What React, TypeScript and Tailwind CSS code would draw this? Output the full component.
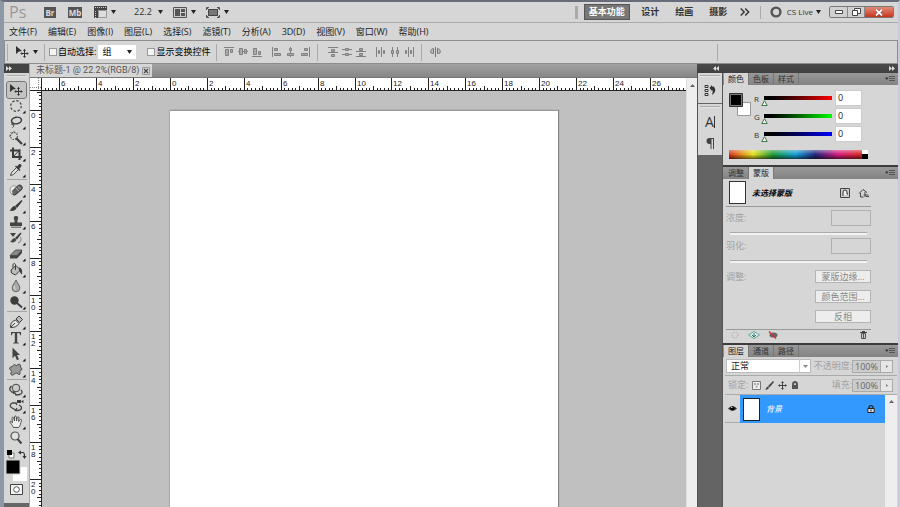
import { useLayoutEffect, useRef, useState, type ReactNode } from "react";
import clsx from "clsx";

const UNIT = 18.45;

/* ---------- small shared drawings ---------- */

function Caret({ className }: { className?: string }) {
  return (
    <svg width="5" height="4" viewBox="0 0 5 4" className={clsx("shrink-0", className)}>
      <path d="M0 0h5L2.5 4z" fill="#222" />
    </svg>
  );
}

function DoubleArrow({ flip }: { flip?: boolean }) {
  return (
    <svg width="6" height="5" viewBox="0 0 6 5" className={flip ? "rotate-180" : ""}>
      <path d="M0 0l3 2.5L0 5zM3 0l3 2.5L3 5z" fill="#ddd" />
    </svg>
  );
}

function PanelMenuIcon() {
  return (
    <svg width="10" height="6" viewBox="0 0 10 6">
      <path d="M0 1.5h3.6L1.8 4z" fill="#333" />
      <path d="M4 .5h6M4 2.5h6M4 4.5h6" stroke="#555" />
    </svg>
  );
}

function ScrollUp() {
  return (
    <svg width="5" height="3" viewBox="0 0 5 3">
      <path d="M0 3L2.5 0 5 3z" fill="#666" />
    </svg>
  );
}

function MovePaths() {
  return (
    <>
      <path d="M1 0l6 5-3 .5L1 8z" fill="#333" />
      <path d="M9.5 4v7M6 7.5h7" stroke="#333" />
      <path d="M9.5 2.8L11 5H8zM9.5 12L11 10H8zM5.2 7.5L7.2 6v3zM13.8 7.5L11.8 6v3z" fill="#333" />
    </>
  );
}

/* ---------- tool icons ---------- */

interface Tool {
  name: string;
  icon: ReactNode;
  single?: boolean;
}

const DARK = "#3c3c3c";

const TOOL_GROUPS: Tool[][] = [
  [
    { name: "移动工具", icon: <g transform="translate(1 2)"><MovePaths /></g>, single: true },
    { name: "椭圆选框工具", icon: <circle cx="8" cy="8" r="5.3" stroke="#444" strokeWidth="1.2" strokeDasharray="2.4 1.7" /> },
    { name: "套索工具", icon: <><ellipse cx="8.5" cy="6.5" rx="5" ry="3.3" stroke={DARK} strokeWidth="1.5" transform="rotate(-10 8.5 6.5)" /><path d="M4.5 9c-1.6.5-1 2.3.5 1.8S6 8.5 4.5 9zM5.5 10.5c.5 1.5 0 2.5-1 3" stroke={DARK} /></> },
    { name: "魔棒工具", icon: <><circle cx="6" cy="6" r="3.5" stroke="#555" strokeWidth="1.2" strokeDasharray="1.5 1.2" /><path d="M6 .8v2M1 6h2M2.5 2.5l1 1M9.5 2.5l-1 1" stroke="#666" /><path d="M8 8l6 6" stroke={DARK} strokeWidth="2.2" /></> },
    { name: "裁剪工具", icon: <><path d="M5 1.5V11h9M2 4.5h9.5V14" stroke={DARK} strokeWidth="2" /><path d="M5 11l7-7.5" stroke={DARK} /></> },
    { name: "吸管工具", icon: <><path d="M2.5 13.5l1-3 5-5 2 2-5 5z" fill="#ddd" stroke={DARK} strokeWidth=".9" /><path d="M7 4.5L11.5 9l1-1-1.2-1.3 2-2.2c1-1.5-1-3.2-2.3-2.2L9 4.4 8 3.5z" fill={DARK} /></> },
  ],
  [
    { name: "污点修复画笔工具", icon: <><rect x="3" y="5.5" width="12" height="5" rx="2.5" fill="#666" stroke={DARK} transform="rotate(-42 9 8)" /><path d="M8 6l3 3.2M10 4.5l2.5 2.5" stroke="#ccc" strokeWidth=".8" /><path d="M5 12C1 12 1 5 5 4c2-.5 3 0 3 1L4 9z" fill="#eee" stroke="#888" strokeWidth=".8" /></> },
    { name: "画笔工具", icon: <><path d="M7 8l6.5-6 1 1L9 10z" fill={DARK} /><path d="M8.5 10.2C7 13 4.5 13.5 1.5 12.5 3.5 11.5 3.5 8 7 8z" fill={DARK} /></> },
    { name: "仿制图章工具", icon: <><path d="M8 2c2.8 0 2.5 2.5 1.5 4v2.5H14V12H2V8.5h4.5V6C5.5 4.5 5.2 2 8 2z" fill="#444" /><path d="M3 13.2h10" stroke="#555" /></> },
    { name: "历史记录画笔工具", icon: <><path d="M7 8l5.5-5.5 1 1L9 9.5z" fill={DARK} /><path d="M8.5 9.7C7 12.5 5 13 2 12 4 11 4 8 7 8zM2 3h6L5 7z" fill="#444" /><path d="M12 7c2 2 1 5-2 6" stroke="#777" /></> },
    { name: "橡皮擦工具", icon: <><path d="M2 9.5L7.5 4H14L9 9.5z" fill="#888" stroke="#444" strokeWidth=".8" /><path d="M2 9.5h7L14 4v3l-5 5.5H2z" fill="#444" /></> },
    { name: "油漆桶工具", icon: <><path d="M3 8l5-4.5L12.5 8l-5 5-4-2z" fill="#bbb" stroke={DARK} /><path d="M7.5 8V3c0-2-2.5-2-2.5 0v3" stroke={DARK} /><path d="M11 5.5c3 .5 3.500 3 3 7-2-1-2-4-3-4z" fill={DARK} /></> },
    { name: "模糊工具", icon: <><path d="M8 2c1 3 3.8 5 3.8 8a3.8 3.8 0 0 1-7.6 0C4.2 7 7 5 8 2z" fill="#aaa" stroke="#666" /><path d="M6.5 8c-.8 2 0 3.500 1 3.700" stroke="#eee" /></> },
    { name: "减淡工具", icon: <><circle cx="6.5" cy="6.5" r="4.2" fill={DARK} /><path d="M9 9l5 4.5" stroke={DARK} strokeWidth="1.8" /></> },
  ],
  [
    { name: "钢笔工具", icon: <><path d="M2.5 13.5c0-4 1-6 5-7.5L11 9.500c-2 3-4 4-8.500 4zM3 13l4-4" fill="#e4e4e4" stroke={DARK} /><path d="M8 5l3-3 3.5 3.5-3 3z" fill="#bbb" stroke={DARK} /></> },
    { name: "横排文字工具", icon: <path d="M3 2h10v3.3h-.8C12 3.5 11.5 3 9.200 3v8.500c0 1 .5 1.200 1.600 1.300v.7H5.200v-.7c1.100-.1 1.600-.3 1.600-1.300V3C4.500 3 4 3.500 3.800 5.300H3z" fill="#444" /> },
    { name: "路径选择工具", icon: <path d="M4.5 1.5L12 9H9l2 4.2-2 1-2-4.4-2.5 2.4z" fill="#444" /> },
    { name: "自定形状工具", icon: <path d="M5 4c.5-2 2.5-2 3 0 2-2 4.5-2.5 4.5 0-1 1.5 2.5 2 1 4-3 .5-.5 3-2 4.5-1.5.5-2-2-3.5-1.5-2 1-3 3-5 1.5-1-1.5 1.5-3 0-4C1 7 1.500 5.500 2.500 5S4.500 5 5 4z" fill="#999" stroke="#444" /> },
  ],
  [
    { name: "3D 旋转工具", icon: <><circle cx="8" cy="6" r="3.8" fill="#ccc" stroke="#444" /><path d="M3.5 4C0 7 2 10 7 11l1 2 4-.5M6 9l-.5 3M13 8c2 2 1 3.5-1 4.5" stroke="#444" strokeWidth="1.3" /></> },
    { name: "3D 相机工具", icon: <><path d="M4 5C0 8 3 10 9 12.5M11 7c4 2 3 5-1 5.5H7.5L9 10M4 5h4l1 2" stroke="#444" strokeWidth="1.3" /><path d="M9 2h4v3H9zM13.5 3l2-1v3l-2-1z" fill={DARK} /></> },
    { name: "抓手工具", icon: <path d="M5.5 13.5C4.5 11 2 9 2 8c0-1.200 1.500-.8 2.500.8L4 4.500C3.700 3 5.300 2.700 5.700 4l.8 3V3c0-1.500 1.700-1.500 1.800 0l.2 4 .8-3.500c.3-1.200 1.900-.8 1.700.5L10.500 7.500 12 5.800c.8-1 2-.3 1.500.8-1 2-.8 5.400-3 6.900z" fill="#eee" stroke="#444" strokeWidth=".9" /> },
    { name: "缩放工具", icon: <><circle cx="7" cy="6" r="4" fill="#e2e2e2" stroke="#555" strokeWidth="1.2" /><path d="M9.5 9l4 4.5" stroke="#444" strokeWidth="2" /></>, single: true },
  ],
];

function Toolbox() {
  const [active, setActive] = useState("移动工具");
  return (
    <aside className="flex w-[26px] shrink-0 flex-col border-r border-[#a8a8a8] bg-[#d6d6d6]">
      <div className="flex h-[9px] items-center bg-[#444] pl-0.5">
        <DoubleArrow />
      </div>
      <div className="mx-[3px] mt-0.5 mb-[5px] h-0.5 border-t border-[#aaa] bg-[#e5e5e5]" />
      {TOOL_GROUPS.map((group, i) => (
        <div key={i} className={clsx("flex flex-col items-center", i > 0 && "mt-px")}>
          {i > 0 && <div className="mb-0.5 h-px w-5 bg-[#a5a5a5]" />}
          {group.map((tool) => (
            <button
              key={tool.name}
              aria-label={tool.name}
              onClick={() => setActive(tool.name)}
              className={clsx(
                "flex h-4 w-[19px] items-center justify-center",
                active === tool.name && "rounded-xs bg-[#c4c4c4] outline outline-[#777]",
              )}
            >
              <svg width="18" height="16" viewBox="0 0 18 16" fill="none">
                {tool.icon}
                {!tool.single && <path d="M17.5 12.5v3h-3z" fill="#111" />}
              </svg>
            </button>
          ))}
        </div>
      ))}
      <svg width="24" height="34" viewBox="0 0 24 34" className="mt-1">
        <path d="M5 3h5v5H5z" fill="#fff" stroke="#777" />
        <path d="M3 0h5v5H3z" fill="#000" />
        <path d="M15.5 2.5H19q1.5 0 1.5 4" fill="none" stroke="#333" strokeWidth="1.2" />
        <path d="M14 2.5L17 .5v4zM20.5 9L18.5 6h4z" fill="#333" />
        <path d="M9 17h14v14H9z" fill="#fff" />
        <path d="M2 10h14v14H2z" fill="#000" stroke="#ccc" />
      </svg>
      <button aria-label="以快速蒙版模式编辑" className="ml-1.5 h-[11px] w-[13px]">
        <svg width="13" height="11" viewBox="0 0 13 11">
          <path d="M.5.5h12v10H.5z" fill="#f2f2f2" stroke="#444" />
          <circle cx="6.5" cy="5.5" r="2.8" fill="#fff" stroke="#555" />
        </svg>
      </button>
      <div className="mt-2 flex-1 bg-[#666]" />
    </aside>
  );
}

/* ---------- header ---------- */

const MENUS = ["文件(F)", "编辑(E)", "图像(I)", "图层(L)", "选择(S)", "滤镜(T)", "分析(A)", "3D(D)", "视图(V)", "窗口(W)", "帮助(H)"];
const WORKSPACES = ["设计", "绘画", "摄影"];

function AppBar() {
  return (
    <header className="flex h-[21px] items-center border-b border-[#aaa] pl-[5px] text-[9px] text-[#333]">
      <span className="w-[35px] text-base leading-5 text-[#999]">Ps</span>
      <button className="h-[11px] w-3 bg-[#555] text-center text-[8px] leading-[11px] font-bold text-[#ddd]">Br</button>
      <button className="ml-3 h-[11px] w-[14px] bg-[#555] text-center text-[8px] leading-[11px] font-bold text-[#ddd]">Mb</button>
      <button aria-label="查看额外内容" className="ml-3 flex items-center gap-1">
        <svg width="13" height="12" viewBox="0 0 13 12">
          <path d="M0 0h13v4H4v8H0z" fill="#444" />
          <path d="M1 1.5h12M1.5 5v7" stroke="#ccc" strokeDasharray="1 1" />
          <path d="M4.5 4.5h8v7h-8z" fill="#ddd" stroke="#999" />
        </svg>
        <Caret />
      </button>
      <button className="ml-[18px] flex items-center gap-1.5">22.2<Caret /></button>
      <button aria-label="排列文档" className="ml-2.5 flex items-center gap-1">
        <svg width="14" height="11" viewBox="0 0 14 11">
          <path d="M.5.5h13v10H.5z" fill="#ccc" stroke="#555" />
          <path d="M2 2h5v7H2zM8 2h4v3H8zM8 6h4v3H8z" fill="#555" />
        </svg>
        <Caret />
      </button>
      <button aria-label="屏幕模式" className="ml-2.5 flex items-center gap-1">
        <svg width="14" height="11" viewBox="0 0 14 11">
          <path d="M2.5 2.5h9v6h-9z" fill="#777" stroke="#444" />
          <path d="M.5 3V.5H3M11 .5h2.5V3M13.5 8v2.5H11M3 10.5H.5V8M1 1l2 2M13 1l-2 2M1 10l2-2M13 10l-2-2" fill="none" stroke="#555" />
        </svg>
        <Caret />
      </button>

      <div className="ml-auto mr-1 flex items-center">
        <div className="mr-1.5 h-[13px] w-[3px] bg-[#aaa]" />
        <button className="h-4 w-[46px] border border-[#555] bg-[#777] font-bold leading-[14px] text-white">基本功能</button>
        <div className="ml-[11px] flex gap-[15px]">
          {WORKSPACES.map((w) => (
            <button key={w} className="w-[19px] font-bold">{w}</button>
          ))}
        </div>
        <button aria-label="更多工作区" className="ml-3">
          <svg width="10" height="8" viewBox="0 0 10 8">
            <path d="M.7.5L4.200 4 .7 7.500M5.200.5L8.700 4 5.200 7.500" fill="none" stroke="#333" strokeWidth="1.4" />
          </svg>
        </button>
        <div className="ml-2.5 mr-[9px] h-[13px] w-px bg-[#aaa]" />
        <button className="flex items-center text-[8px]">
          <svg width="12" height="12" viewBox="0 0 12 12" className="mr-[5px]">
            <circle cx="6" cy="6" r="4.4" fill="none" stroke="#555" strokeWidth="2.4" />
          </svg>
          CS Live
          <Caret className="ml-[3px]" />
        </button>
        <div className="ml-2 flex h-3 overflow-hidden rounded-xs border border-[#777]">
          <button aria-label="最小化" className="flex w-[17px] items-center justify-center bg-[#d0d0d0]">
            <svg width="8" height="4" viewBox="0 0 8 4"><path d="M.5.5h7v3h-7z" fill="#fff" stroke="#444" /></svg>
          </button>
          <button aria-label="还原" className="flex w-[18px] items-center justify-center border-x border-[#888] bg-[#d0d0d0]">
            <svg width="9" height="8" viewBox="0 0 9 8">
              <path d="M2.5.5h6v5h-6z" fill="#fff" stroke="#444" />
              <path d="M.5 2.5h5v5h-5z" fill="#fff" stroke="#444" />
            </svg>
          </button>
          <button aria-label="关闭" className="flex w-7 items-center justify-center bg-linear-to-b from-[#e08a75] to-[#c8321a]">
            <svg width="8" height="7" viewBox="0 0 8 7">
              <path d="M1 .5l6 6M7 .5l-6 6" stroke="#743" strokeWidth="3" />
              <path d="M1 .5l6 6M7 .5l-6 6" stroke="#fff" strokeWidth="1.8" />
            </svg>
          </button>
        </div>
      </div>
    </header>
  );
}

function MenuBar() {
  return (
    <nav className="flex h-[17px] items-center gap-[11px] pl-[5px] text-[9px] text-[#222]">
      {MENUS.map((m) => (
        <button key={m} className="whitespace-nowrap">{m}</button>
      ))}
    </nav>
  );
}

const ALIGN_GROUPS: { name: string; d: string; line: string }[][] = [
  [
    { name: "顶对齐", d: "M1.5 2.5h3v6h-3zM6.5 2.5h2v3h-2z", line: "M0 .5h10" },
    { name: "垂直居中对齐", d: "M1.5 1.5h3v6h-3zM6.5 2.5h2v4h-2z", line: "M0 4.5h10" },
    { name: "底对齐", d: "M1.5 1.5h3v6h-3zM6.5 4.5h2v3h-2z", line: "M0 9.5h10" },
  ],
  [
    { name: "左对齐", d: "M2.5 1.5h3v2h-3zM2.5 6.5h6v2h-6z", line: "M.5 0v10" },
    { name: "水平居中对齐", d: "M3.5 1.5h2v2h-2zM1.5 6.5h6v2h-6z", line: "M4.5 0v10" },
    { name: "右对齐", d: "M4.5 1.5h3v2h-3zM1.5 6.5h6v2h-6z", line: "M9.5 0v10" },
  ],
  [
    { name: "按顶分布", d: "M3.5 2.5h3v2h-3zM3.5 7.5h3v2h-3z", line: "M0 .5h10M0 5.5h10" },
    { name: "垂直居中分布", d: "M3.5 1.5h3v2h-3zM3.5 6.5h3v2h-3z", line: "M0 2.5h10M0 7.5h10" },
    { name: "按底分布", d: "M3.5 1.5h3v2h-3zM3.5 6.5h3v2h-3z", line: "M0 4.5h10M0 9.5h10" },
  ],
  [
    { name: "按左分布", d: "M2.5 3.5h1v3h-1zM7.5 3.5h1v3h-1z", line: "M.5 0v10M5.5 0v10" },
    { name: "水平居中分布", d: "M1.5 3.5h2v3h-2zM6.5 3.5h2v3h-2z", line: "M2.5 0v10M7.5 0v10" },
    { name: "按右分布", d: "M1.5 3.5h1v3h-1zM6.5 3.5h1v3h-1z", line: "M4.5 0v10M9.5 0v10" },
  ],
];

function AlignGroup({ index }: { index: number }) {
  return (
    <div className="flex gap-1">
      {ALIGN_GROUPS[index].map((a) => (
        <button key={a.name} aria-label={a.name} className="w-[10px]">
          <svg width="10" height="10" viewBox="0 0 10 10" fill="none" stroke="#808080">
            <path d={a.line} />
            <path d={a.d} fill="#aaa" />
          </svg>
        </button>
      ))}
    </div>
  );
}

function OptionsBar() {
  const divider = "h-[17px] w-px bg-[#aaa]";
  const checkbox = "size-2 appearance-none border border-[#999] bg-[#f4f4f4] checked:bg-[#555]";
  return (
    <section className="flex h-6 items-center border border-[#8c8c8c] text-[9px] text-black">
      <div className="ml-0.5 mr-1.5 h-[17px] w-0.5 border-l border-[#aaa]" />
      <button aria-label="工具预设" className="flex items-center gap-1">
        <svg width="14" height="12" viewBox="0 0 14 12"><MovePaths /></svg>
        <Caret />
      </button>
      <div className={clsx(divider, "ml-1.5 mr-1")} />
      <label className="flex items-center gap-px">
        <input type="checkbox" className={checkbox} />
        自动选择:
      </label>
      <div className="relative ml-0.5 flex items-center">
        <select aria-label="自动选择" className="h-[14px] w-[38px] appearance-none bg-white pl-1 leading-[14px]">
          <option>组</option>
          <option>图层</option>
        </select>
        <Caret className="pointer-events-none absolute right-1" />
      </div>
      <label className="ml-[11px] flex items-center gap-px">
        <input type="checkbox" className={checkbox} />
        显示变换控件
      </label>
      <div className={clsx(divider, "ml-1.5 mr-[7px]")} />
      <AlignGroup index={0} />
      <div className="w-[10px]" />
      <AlignGroup index={1} />
      <div className={clsx(divider, "ml-[7px] mr-2.5")} />
      <AlignGroup index={2} />
      <div className="w-[10px]" />
      <AlignGroup index={3} />
      <div className={clsx(divider, "ml-[7px] mr-2")} />
      <button aria-label="自动对齐图层">
        <svg width="11" height="10" viewBox="0 0 11 10" fill="#bbb" stroke="#777">
          <path d="M5.5 0v10M3.5 1.5c-3 0-4 5-1 5h1zM7.5 1.5c3 0 4 5 1 5h-1z" />
        </svg>
      </button>
      <div className={clsx(divider, "ml-auto mr-[179px]")} />
    </section>
  );
}

/* ---------- document ---------- */

/** Tick marks for a ruler of `length` px whose zero lies at `zero` px. */
function ticks(zero: number, length: number) {
  const list: { pos: number; size: number; label?: string }[] = [];
  const first = Math.ceil((-zero * 5) / UNIT);
  const last = Math.floor(((length - zero) * 5) / UNIT);
  for (let i = first; i <= last; i++) {
    const pos = Math.round(zero + (i * UNIT) / 5);
    if (i % 10 === 0) {
      // no room for a number right at the end
      const label = pos < length - 16 ? String(Math.abs(i / 5)) : undefined;
      list.push({ pos, size: 12, label });
    } else {
      list.push({ pos, size: i % 5 === 0 ? 4 : 2 });
    }
  }
  return list;
}

function useSvgSize() {
  const ref = useRef<SVGSVGElement>(null);
  const [size, setSize] = useState({ width: 0, height: 0 });
  useLayoutEffect(() => {
    const el = ref.current;
    if (!el) return;
    const measure = () => {
      const { width, height } = el.getBoundingClientRect();
      setSize({ width, height });
    };
    measure();
    const observer = new ResizeObserver(measure);
    observer.observe(el);
    return () => observer.disconnect();
  }, []);
  return { ref, ...size };
}

function HorizontalRuler() {
  const { ref, width } = useSvgSize();
  return (
    <svg ref={ref} className="block h-[13px] min-w-0 flex-1 bg-white font-['Liberation_Sans',sans-serif]">
      {ticks(128, width).map((t) => (
        <g key={t.pos}>
          <rect x={t.pos} y={12 - t.size} width="1" height={t.size} fill="#222" />
          {t.label && <text x={t.pos + 2} y="8" fontSize="8" fill="#222">{t.label}</text>}
        </g>
      ))}
      <rect y="12" width="100%" height="1" fill="#222" />
    </svg>
  );
}

function VerticalRuler() {
  const { ref, height } = useSvgSize();
  return (
    <svg ref={ref} className="block w-3 shrink-0 bg-white font-['Liberation_Sans',sans-serif]">
      {ticks(19, height).map((t) => (
        <g key={t.pos}>
          <rect x={11 - t.size} y={t.pos} width={t.size} height="1" fill="#222" />
          {t.label?.split("").map((digit, i) => (
            <text key={i} x="1" y={t.pos + 8 + i * 7} fontSize="8" fill="#222">{digit}</text>
          ))}
        </g>
      ))}
      <rect x="11" width="1" height="100%" fill="#222" />
    </svg>
  );
}

function DocumentWindow() {
  return (
    <main className="flex min-w-0 flex-1 flex-col">
      <div className="flex h-[14px] border-b border-[#777] bg-linear-to-b from-[#a2a2a2] to-[#868686]">
        <div className="flex items-center gap-0.5 bg-[#d6d6d6] pl-1.5 pr-0.5 font-['Roboto','Noto_Sans_CJK_SC',sans-serif] text-[9px] whitespace-nowrap text-[#555]">
          未标题-1 @ 22.2%(RGB/8)
          <button aria-label="关闭文档">
            <svg width="8" height="8" viewBox="0 0 8 8">
              <path d="M.5.5h7v7h-7z" fill="none" stroke="#999" />
              <path d="M2 2l4 4M6 2L2 6" stroke="#444" strokeWidth="1.2" />
            </svg>
          </button>
        </div>
      </div>
      <div className="flex min-h-0 flex-1">
        <div className="flex min-w-0 flex-1 flex-col">
          <div className="flex">
            <svg width="12" height="13" viewBox="0 0 12 13" className="bg-white">
              <path d="M0 9.5h12M8.500 0v13" stroke="#888" strokeDasharray="1 1" />
              <path d="M11.5 0v13M0 12.5h12" stroke="#222" />
            </svg>
            <HorizontalRuler />
          </div>
          <div className="flex min-h-0 flex-1">
            <VerticalRuler />
            <div className="flex min-w-0 flex-1 overflow-hidden bg-[#c0c0c0] pl-32 pt-[19px]">
              <div className="w-[388px] shrink-0 border-t border-[#999] bg-white shadow-[1px_0_1px_#888,-1px_0_1px_#aaa]" />
            </div>
          </div>
        </div>
        <div className="flex w-[11px] justify-center border-l border-[#ddd] bg-[#eee] pt-1.5">
          <ScrollUp />
        </div>
      </div>
    </main>
  );
}

/* ---------- panels ---------- */

function IconDock() {
  return (
    <div className="flex w-[26px] shrink-0 flex-col border-x border-[#555] bg-[#646464]">
      <div className="mb-px flex h-[30px] flex-col items-center gap-[7px] bg-[#d6d6d6] pt-0.5">
        <div className="h-0.5 w-5 border-t border-[#aaa] bg-[#e5e5e5]" />
        <button aria-label="历史记录">
          <svg width="12" height="13" viewBox="0 0 12 13">
            <path d="M1 1.5h3v2H1zM1 5.5h3v2H1zM1 9.5h3v2H1z" fill="#eee" stroke="#333" />
            <path d="M7 2.5h2.500c3 2.500 2 6-1.500 8.500 1-3 1-5-1-6z" fill="#333" />
            <path d="M5.5 4L8 1v6z" fill="#333" />
          </svg>
        </button>
      </div>
      <div className="flex h-[51px] flex-col items-center bg-[#d6d6d6] pt-0.5">
        <div className="h-0.5 w-5 border-t border-[#aaa] bg-[#e5e5e5]" />
        <button aria-label="字符" className="mt-1.5 flex h-4 items-center text-sm leading-4 text-[#333]">
          A<span className="h-3 w-px bg-[#333]" />
        </button>
        <button aria-label="段落" className="mt-2">
          <svg width="8" height="11" viewBox="0 0 8 11">
            <path d="M3.5 0H8v11H7V1H5.5v10h-1V6h-1a3 3 0 0 1 0-6z" fill="#444" />
          </svg>
        </button>
      </div>
    </div>
  );
}

function Panel({ tabs, active, grow, children }: { tabs: string[]; active: number; grow?: boolean; children: ReactNode }) {
  const [current, setCurrent] = useState(active);
  return (
    <section className={clsx("flex flex-col bg-[#d6d6d6]", grow ? "flex-1" : "border-b-2 border-[#3c3c3c]")}>
      <div className="flex h-3 bg-linear-to-b from-[#999] to-[#838383] pl-px" role="tablist">
        {tabs.map((tab, i) => (
          <button
            key={tab}
            role="tab"
            aria-selected={current === i}
            onClick={() => setCurrent(i)}
            className={clsx(
              "w-[25px] border-r border-[#777] text-[8px] leading-3",
              current === i ? "bg-[#d6d6d6] text-[#222]" : "text-[#333]",
            )}
          >
            {tab}
          </button>
        ))}
        <button aria-label="面板菜单" className="ml-auto mr-[3px]">
          <PanelMenuIcon />
        </button>
      </div>
      {children}
    </section>
  );
}

const CHANNELS = [
  { name: "R", track: "bg-linear-to-r from-black to-[#f00]" },
  { name: "G", track: "bg-linear-to-r from-black to-[#0f0]" },
  { name: "B", track: "bg-linear-to-r from-black to-[#00f]" },
];

function ColorPanel() {
  const [values, setValues] = useState([0, 0, 0]);
  const update = (i: number, v: number) =>
    setValues((p) => p.map((old, n) => (n === i ? Math.min(255, Math.max(0, v || 0)) : old)));

  return (
    <Panel tabs={["颜色", "色板", "样式"]} active={0}>
      <div className="flex px-1.5 pt-1.5">
        <svg width="22" height="23" viewBox="0 0 22 23" className="mt-0.5 shrink-0">
          <path d="M8.5 9.5h13v13h-13z" fill="#fff" stroke="#999" />
          <path d="M.5.5h13v13H.5z" fill="#777" stroke="#333" />
          <path d="M2 2h10v10H2z" fill="#000" />
        </svg>
        <div className="ml-[3px] flex flex-col gap-1">
          {CHANNELS.map((c, i) => (
            <div key={c.name} className="flex h-[14px] text-[8px] text-[#333]">
              <label htmlFor={`ch-${c.name}`} className="w-2.5 pt-0.5 leading-3">{c.name}</label>
              <div className="relative mt-[5px] h-2.5 w-[68px]">
                <div className={clsx("h-1 w-full", c.track)} />
                <svg
                  width="7" height="6" viewBox="0 0 7 6"
                  className="absolute -ml-[3px]"
                  style={{ left: `${(values[i] / 255) * 100}%` }}
                >
                  <path d="M3.5.7L6.200 5.500H.8z" fill="#fff" stroke="#3b7a46" />
                </svg>
                <input
                  type="range" min={0} max={255} value={values[i]}
                  aria-label={`${c.name} 滑块`}
                  onChange={(e) => update(i, Number(e.target.value))}
                  className="absolute inset-0 h-full w-full cursor-pointer opacity-0"
                />
              </div>
              <input
                id={`ch-${c.name}`}
                value={values[i]}
                onChange={(e) => update(i, Number(e.target.value))}
                className="ml-1 h-[14px] w-[25px] bg-white pl-0.5 text-[9px] leading-[14px] text-[#222] outline outline-[#ccc]"
              />
            </div>
          ))}
        </div>
      </div>
      <div className="mx-1.5 mt-[9px] mb-1.5 flex h-[9px] w-[139px]">
        <div className="flex-1 bg-[linear-gradient(to_right,#d9301c,#e8e020_18%,#1c9a38_33%,#12a0d8_50%,#25257c_65%,#d81c80_82%,#d92a20)]">
          <div className="h-full bg-linear-to-b from-white/40 via-transparent to-black/60" />
        </div>
        <div className="h-full w-1.5 bg-linear-to-b from-white from-50% to-black to-50%" />
      </div>
    </Panel>
  );
}

const MASK_FIELDS = ["浓度:", "羽化:"];
const MASK_ACTIONS = ["蒙版边缘...", "颜色范围...", "反相"];

function MasksPanel() {
  return (
    <Panel tabs={["调整", "蒙版"]} active={1}>
      <div className="ml-[3px] w-[145px] text-[9px] text-[#a2a2a2]">
        <div className="flex h-7 items-center border-b border-[#999] pl-[3px] pr-0.5">
          <div className="h-[23px] w-[17px] border border-[#333] bg-white" />
          <span className="ml-1.5 text-[8px] font-bold text-black italic">未选择蒙版</span>
          <button aria-label="添加像素蒙版" className="ml-auto mr-2">
            <svg width="10" height="10" viewBox="0 0 10 10">
              <path d="M.5.5h9v9h-9z" fill="#ccc" stroke="#444" />
              <path d="M3 8V4q0-2 2-2t2 2v2h1" fill="#eee" stroke="#333" />
            </svg>
          </button>
          <button aria-label="添加矢量蒙版">
            <svg width="11" height="10" viewBox="0 0 11 10" fill="none" stroke="#444">
              <path d="M1 5.5L5 1.5l4 3M2.5 5v4h3M7 4v5M5.5 7h5M8 8.5h3" />
            </svg>
          </button>
        </div>
        {MASK_FIELDS.map((field) => (
          <div key={field} className="h-7 pt-[3px]">
            <label className="flex h-4 items-center justify-between">
              {field}
              <input disabled className="h-4 w-10 border border-[#b0b0b0]" />
            </label>
            <div className="relative ml-1 mt-1.5 h-1 w-[137px] border-t border-[#aaa]">
              <div className="h-0.5 bg-[#f2f2f2]" />
              <input type="range" disabled aria-label={`${field} 滑块`} className="absolute inset-0 h-1 w-full opacity-0" />
            </div>
          </div>
        ))}
        <div className="flex justify-between pt-[7px] pb-[6px]">
          <span>调整:</span>
          <div className="flex flex-col gap-[7px]">
            {MASK_ACTIONS.map((a) => (
              <button key={a} disabled className="h-[13px] w-14 border border-[#b4b4b4] bg-[#ededed] leading-[11px] text-[#888]">
                {a}
              </button>
            ))}
          </div>
        </div>
        <div className="flex h-[14px] items-start gap-2 border-t border-[#999] px-1 pt-px">
          <button aria-label="载入选区">
            <svg width="10" height="8" viewBox="0 0 10 8"><circle cx="5" cy="4" r="3" fill="none" stroke="#aaa" strokeDasharray="1.5 1" /></svg>
          </button>
          <button aria-label="应用蒙版">
            <svg width="12" height="8" viewBox="0 0 12 8">
              <path d="M.5 4L6 .5 11.5 4 6 7.500z" fill="#dff3ea" stroke="#5fa88f" />
              <path d="M6 2v4M4 4l2 2 2-2" fill="none" stroke="#367" />
            </svg>
          </button>
          <button aria-label="停用蒙版">
            <svg width="10" height="8" viewBox="0 0 10 8">
              <ellipse cx="5.5" cy="4" rx="4" ry="2.6" fill="#666" />
              <path d="M1 .5l7 7" stroke="#c33" strokeWidth="1.5" />
            </svg>
          </button>
          <button aria-label="删除蒙版" className="ml-auto">
            <svg width="7" height="8" viewBox="0 0 7 8">
              <path d="M0 1.5h7M2 .5h3" stroke="#444" />
              <path d="M1.5 2.5h4v5h-4zM3.5 3v4" fill="#ccc" stroke="#555" />
            </svg>
          </button>
        </div>
      </div>
    </Panel>
  );
}

function PercentField({ label }: { label: string }) {
  return (
    <div className="ml-auto flex items-center">
      <label className="flex items-center text-[#a2a2a2]">
        {label}
        <input disabled defaultValue="100%" className="h-[13px] w-[29px] border border-[#aaa] bg-[#ccc] pl-0.5 leading-[11px] text-[#666]" />
      </label>
      <button disabled aria-label={`${label} 菜单`} className="flex h-[13px] w-3 items-center justify-center border border-l-0 border-[#aaa] bg-[#e6e6e6]">
        <svg width="2" height="3" viewBox="0 0 2 3"><path d="M0 0l2 1.5L0 3z" fill="#777" /></svg>
      </button>
    </div>
  );
}

function LayersPanel() {
  return (
    <Panel tabs={["图层", "通道", "路径"]} active={0} grow>
      <div className="ml-0.5 mr-px flex flex-1 flex-col text-[9px]">
        <div className="flex h-[19px] items-center border-b border-[#aaa] pl-px pr-1">
          <div className="relative flex items-center">
            <select aria-label="混合模式" className="h-[14px] w-[85px] appearance-none border border-[#bbb] bg-white pl-1 leading-3 text-[#222]">
              <option>正常</option>
              <option>溶解</option>
            </select>
            <div className="pointer-events-none absolute right-0 flex h-[14px] w-3 items-center justify-center border-l border-[#ccc]">
              <svg width="5" height="3" viewBox="0 0 5 3">
                <path d="M0 0h5L2.5 3z" fill="#888" />
              </svg>
            </div>
          </div>
          <PercentField label="不透明度:" />
        </div>
        <div className="flex h-[19px] items-center gap-1 border-b border-[#aaa] pl-[3px] pr-1">
          <span className="text-[#a2a2a2]">锁定:</span>
          <button aria-label="锁定透明像素">
            <svg width="9" height="9" viewBox="0 0 9 9">
              <path d="M.5.5h8v8h-8z" fill="#eee" stroke="#777" />
              <path d="M2 2h2v2H2zM5 2h2v2H5zM3.5 4.500h2v2h-2z" fill="#aaa" />
            </svg>
          </button>
          <button aria-label="锁定图像像素">
            <svg width="9" height="9" viewBox="0 0 9 9"><path d="M3 5l5-5 1 1-4.5 5.5zM3 5.5L4 7C3 8.500 1.500 9 0 8.700 1.500 8 1 6 3 5.500z" fill="#444" /></svg>
          </button>
          <button aria-label="锁定位置">
            <svg width="9" height="9" viewBox="0 0 9 9">
              <path d="M4.5 1v7M1 4.5h7" stroke="#444" />
              <path d="M4.5 0L6 2H3zM4.5 9L6 7H3zM0 4.5L2 3v3zM9 4.5L7 3v3z" fill="#444" />
            </svg>
          </button>
          <button aria-label="锁定全部">
            <svg width="8" height="8" viewBox="0 0 8 8">
              <path d="M1 8V3.5Q1 0 4 0t3 3.5V8z" fill="#555" />
              <path d="M3 4V3q0-1 1-1t1 1v1z" fill="#ccc" />
            </svg>
          </button>
          <PercentField label="填充:" />
        </div>
        <div className="flex flex-1">
          <div className="flex-1">
            <div className="flex h-7 bg-[#3399ff]">
              <button aria-label="图层可见性" className="flex w-[15px] items-center justify-center border-b border-[#aaa] bg-[#d6d6d6]">
                <svg width="9" height="7" viewBox="0 0 9 7">
                  <path d="M0 3.5Q4.5-1.5 9 3.5 4.5 8 0 3.5z" fill="#333" />
                  <circle cx="4.5" cy="3.5" r="2" fill="#000" />
                  <path d="M3 2.5h1.500" stroke="#fff" strokeWidth=".8" />
                </svg>
              </button>
              <button className="flex flex-1 items-center pl-[3px] pr-2.5">
                <span className="h-[23px] w-[17px] border border-[#222] bg-white" />
                <span className="ml-1.5 text-[8px] text-white italic">背景</span>
                <svg width="8" height="8" viewBox="0 0 8 8" className="ml-auto">
                  <path d="M2 4V2.5Q2 .6 4 .6t2 1.9V4" fill="none" stroke="#222" strokeWidth="1.2" />
                  <path d="M.8 3.5h6.400v4H.8z" fill="#ddd" stroke="#222" />
                  <path d="M4 4.5v2" stroke="#222" />
                </svg>
              </button>
            </div>
          </div>
          <div className="flex w-3 justify-center bg-[#eee] pt-[5px]">
            <ScrollUp />
          </div>
        </div>
      </div>
    </Panel>
  );
}

export default function App() {
  return (
    <div className="flex h-screen min-h-[507px] flex-col overflow-hidden border-t-2 border-r-2 border-l-4 border-t-[#686b7a] border-r-[#c4ccd8] border-l-[#8b99a6] bg-[#d6d6d6] font-['Open_Sans','Noto_Sans_CJK_SC',sans-serif]">
      <AppBar />
      <MenuBar />
      <OptionsBar />
      <div className="flex min-h-0 flex-1">
        <Toolbox />
        <DocumentWindow />
        <div className="flex w-[201px] shrink-0 flex-col">
          <div className="flex h-[9px] items-center bg-linear-to-b from-[#4a4a4a] to-[#404040]">
            <div className="flex w-[26px] justify-end pr-1"><DoubleArrow flip /></div>
            <div className="ml-auto pr-[3px]"><DoubleArrow /></div>
          </div>
          <div className="flex min-h-0 flex-1">
            <IconDock />
            <div className="flex min-w-0 flex-1 flex-col">
              <ColorPanel />
              <MasksPanel />
              <LayersPanel />
            </div>
          </div>
        </div>
      </div>
    </div>
  );
}
